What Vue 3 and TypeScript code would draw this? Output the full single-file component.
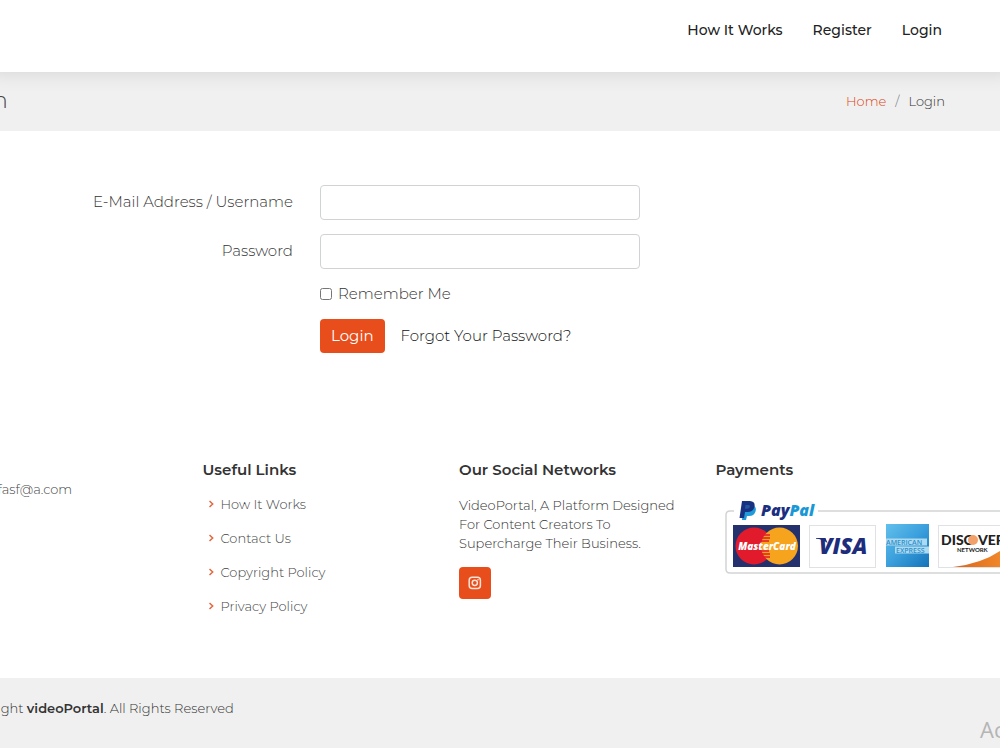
<script setup lang="ts">
import { ref } from 'vue'

interface NavLink {
  label: string
  href: string
}

const navLinks: NavLink[] = [
  { label: 'How It Works', href: '#how-it-works' },
  { label: 'Register', href: '#register' },
  { label: 'Login', href: '#login' },
]

const usefulLinks: NavLink[] = [
  { label: 'How It Works', href: '#how-it-works' },
  { label: 'Contact Us', href: '#contact' },
  { label: 'Copyright Policy', href: '#copyright' },
  { label: 'Privacy Policy', href: '#privacy' },
]

const username = ref('')
const password = ref('')
const remember = ref(false)
</script>

<template>
  <div class="page">
    <header class="header">
      <nav class="container nav">
        <a v-for="link in navLinks" :key="link.label" :href="link.href">{{ link.label }}</a>
      </nav>
    </header>

    <section class="titlebar">
      <div class="container titlebar-row">
        <h1>Login</h1>
        <ol class="crumbs">
          <li><a href="#home">Home</a></li>
          <li class="slash">/</li>
          <li>Login</li>
        </ol>
      </div>
    </section>

    <main>
      <form class="container form" @submit.prevent>
        <label class="field-label" for="username">E-Mail Address / Username</label>
        <input id="username" v-model="username" class="field" type="text" />
        <label class="field-label" for="password">Password</label>
        <input id="password" v-model="password" class="field" type="password" />
        <label class="remember">
          <input v-model="remember" type="checkbox" />
          <span>Remember Me</span>
        </label>
        <div class="actions">
          <button type="submit">Login</button>
          <a href="#forgot">Forgot Your Password?</a>
        </div>
      </form>
    </main>

    <footer>
      <div class="container columns">
        <section class="contact">
          <p>Email: dfasf@a.com</p>
        </section>
        <section>
          <h2>Useful Links</h2>
          <ul class="links">
            <li v-for="link in usefulLinks" :key="link.label">
              <svg width="6" height="8" viewBox="0 0 6 8" aria-hidden="true">
                <path d="M0.500 1l3.200 3-3.200 3" fill="none" stroke="#e2683f" stroke-width="1.5" />
              </svg>
              <a :href="link.href">{{ link.label }}</a>
            </li>
          </ul>
        </section>
        <section>
          <h2>Our Social Networks</h2>
          <p class="about">VideoPortal, A Platform Designed For Content Creators To Supercharge Their Business.</p>
          <a class="social" href="#instagram" aria-label="Instagram">
            <svg width="14" height="14" viewBox="0 0 14 14" fill="none" stroke="#fbe3d9" stroke-width="1.5">
              <rect x="1.2" y="1.2" width="11.2" height="11.2" rx="3" />
              <circle cx="6.8" cy="6.8" r="2.6" />
              <circle cx="10" cy="3.7" r="0.8" fill="#fbe3d9" stroke="none" />
            </svg>
          </a>
        </section>
        <section class="payments">
          <h2>Payments</h2>
          <svg class="cards" width="340" height="76" viewBox="0 0 340 76" role="img" aria-label="Accepted payment methods">
            <defs>
              <linearGradient id="amex" x1="0" y1="0" x2="1" y2="1">
                <stop offset="0" stop-color="#62c0ec" />
                <stop offset="0.5" stop-color="#3a9fdc" />
                <stop offset="1" stop-color="#1373b9" />
              </linearGradient>
              <linearGradient id="swoosh" x1="0" y1="0" x2="1" y2="0">
                <stop offset="0" stop-color="#d9641c" />
                <stop offset="1" stop-color="#f28a2b" />
              </linearGradient>
            </defs>
            <path d="M9 11H5Q1 11 1 15V69Q1 73 5 73H334Q338 73 338 69V15Q338 11 334 11H93" fill="none" stroke="#d2d3d4" stroke-width="1.5" />
            <!-- PayPal monogram -->
            <path d="M18.5 5.5h9q4.5 1 3 6-1.5 4.500-6.500 4.500h-2l-1 4h-4z" fill="#1f9bd9" />
            <path d="M17 1h8q5.500.6 4.500 5.800-1.200 5.200-7 5.200h-2.500l-1 6h-4.500z" fill="#173280" />
            <path d="M20.500 5h3.400q1.400.4 1 2-.5 1.800-2.600 1.800h-2.400z" fill="#24559f" />
            <text x="36" y="16" class="paypal" fill="#1b2f80">Pay<tspan fill="#1a97d5">Pal</tspan></text>
            <!-- MasterCard -->
            <rect x="8" y="25" width="67" height="42" fill="#25316d" />
            <circle cx="29" cy="46" r="18.5" fill="#e11b2c" />
            <circle cx="54.5" cy="46" r="18.5" fill="#f6a31d" />
            <path d="M38 35h7M37 38h8M36 41h8M36 51h8M37 54h8M38 57h7" stroke="#e11b2c" stroke-width="1.5" />
            <text x="42" y="50" text-anchor="middle" class="mastercard">MasterCard</text>
            <!-- Visa -->
            <rect x="84.5" y="25.5" width="66" height="42" fill="#fff" stroke="#dfe1e4" />
            <text x="94" y="54" class="visa">VISA</text>
            <path d="M91 38h9.500l2 5Q97 39 91 38.800z" fill="#1d2d7c" />
            <!-- American Express -->
            <rect x="161" y="24" width="43" height="43" fill="url(#amex)" />
            <path d="M161 38.500h41v7h-41zM170 46.500h34v7h-34z" fill="#acdaf2" />
            <text x="161" y="45" class="amex">AMERICAN</text>
            <text x="171" y="53" class="amex">EXPRESS</text>
            <!-- Discover -->
            <rect x="213.5" y="25.5" width="66" height="42" fill="#fff" stroke="#dfe1e4" />
            <path d="M228 67Q260 63 279 48V67z" fill="url(#swoosh)" />
            <text x="216" y="45" class="discover">DISC</text>
            <circle cx="248" cy="40" r="5" fill="#f3a16b" />
            <text x="253" y="45" class="discover">VER</text>
            <text x="232" y="52" class="network">NETWORK</text>
          </svg>
        </section>
      </div>
      <div class="copyright">
        <p class="container">© Copyright <strong>videoPortal</strong>. All Rights Reserved</p>
      </div>
    </footer>
    <div class="watermark" aria-hidden="true">Activate</div>
  </div>
</template>

<style>
body {
  margin: 0;
  background: #fff;
}
</style>

<style scoped>
.page {
  position: relative;
  overflow: hidden;
  font-family: Montserrat, Inter, sans-serif;
  font-size: 13px;
  font-weight: 300;
  line-height: 20px;
  color: #333;
}

h1,
h2,
p,
ol,
ul {
  margin: 0;
  padding: 0;
  list-style: none;
}

a {
  color: inherit;
  text-decoration: none;
}

.container {
  margin: 0 55px 0 -54px;
}

.header {
  position: relative;
  padding: 20px 0 32px;
  background: #fff;
  box-shadow: 0 -12px 20px 12px rgba(0, 0, 0, 0.12);
}

.nav {
  display: flex;
  justify-content: flex-end;
  gap: 30px;
  padding-right: 3px;
  font-size: 14px;
  font-weight: 500;
  color: #222;
}

.titlebar {
  padding: 13px 0 14px;
  background: #f0f0f0;
}

.titlebar-row {
  display: flex;
  justify-content: space-between;
  align-items: center;
}

h1 {
  font-size: 22px;
  font-weight: 300;
  line-height: 32px;
  color: #444;
}

.crumbs {
  display: flex;
  gap: 9px;
}

.crumbs a {
  color: #dc4410;
}

.slash {
  color: #6c757d;
}

.form {
  display: grid;
  grid-template-columns: 347fr 320fr 278fr;
  column-gap: 27px;
  padding: 54px 0 97px;
  font-size: 15px;
  line-height: 22px;
}

.field-label {
  grid-column: 1;
  padding-top: 6px;
  text-align: right;
}

.field {
  grid-column: 2;
  box-sizing: border-box;
  width: 100%;
  height: 35px;
  margin-bottom: 14px;
  padding: 5px 11px;
  border: 1px solid #d0d2d4;
  border-radius: 4px;
  font: inherit;
  color: #495057;
}

.remember {
  grid-column: 2;
  display: flex;
  align-items: center;
  gap: 6px;
  margin-bottom: 14px;
}

.remember input {
  width: 12px;
  height: 12px;
  margin: 0;
}

.actions {
  grid-column: 2;
  display: flex;
  align-items: center;
  gap: 16px;
}

.actions a {
  color: #111;
}

button {
  padding: 6px 11px;
  border: 0;
  border-radius: 4px;
  background: #e84e1b;
  color: #fff;
  font: inherit;
  font-weight: 400;
}

.columns {
  display: grid;
  grid-template-columns: repeat(4, minmax(0, 1fr));
  column-gap: 27px;
  padding: 10px 0 62px;
}

.contact {
  padding-top: 19px;
  color: #444;
}

h2 {
  margin-bottom: 14px;
  font-size: 15px;
  font-weight: 600;
  line-height: 20px;
  color: #333;
}

.links {
  display: grid;
  gap: 14px;
  color: #444;
}

.links li {
  display: flex;
  align-items: center;
  gap: 6px;
  padding-left: 6px;
}

.about {
  margin: 16px 0 14px;
  line-height: 19px;
}

.social {
  display: flex;
  align-items: center;
  justify-content: center;
  width: 32px;
  height: 32px;
  border-radius: 4px;
  background: #e84e1b;
}

.cards {
  display: block;
  margin: 20px 0 0 9px;
}

.cards text {
  font-family: "Open Sans", sans-serif;
  font-weight: 800;
}

.cards .paypal {
  font-size: 16px;
  font-style: italic;
}

.cards .mastercard {
  font-size: 10px;
  font-style: italic;
  fill: #fff;
}

.cards .visa {
  font-size: 22px;
  font-style: italic;
  fill: #1d2d7c;
}

.cards .amex {
  font-size: 7px;
  font-weight: 600;
  fill: #2f8fc9;
}

.cards .discover {
  font-family: Lato, sans-serif;
  font-size: 14px;
  font-weight: 900;
  fill: #222;
}

.cards .network {
  font-family: Lato, sans-serif;
  font-size: 6px;
  font-weight: 700;
  fill: #222;
}

.copyright {
  padding: 20px 0 30px;
  background: #f0f0f0;
}

strong {
  font-weight: 600;
}

.watermark {
  position: absolute;
  top: 715px;
  left: calc(100% - 20px);
  font-family: "Open Sans", sans-serif;
  font-size: 22px;
  font-weight: 400;
  line-height: 28px;
  color: #b5b5b5;
}
</style>
